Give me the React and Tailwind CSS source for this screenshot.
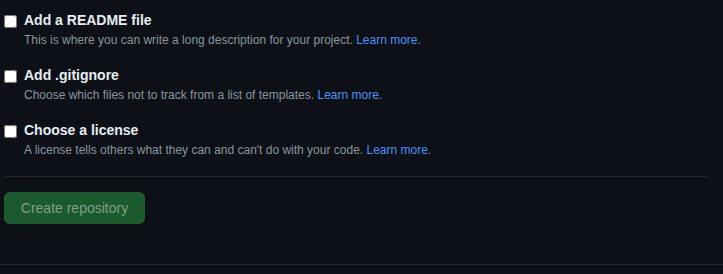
export default function App() {
  const items = [
    {
      title: "Add a README file",
      desc: "This is where you can write a long description for your project.",
    },
    {
      title: "Add .gitignore",
      desc: "Choose which files not to track from a list of templates.",
    },
    {
      title: "Choose a license",
      desc: "A license tells others what they can and can't do with your code.",
    },
  ];
  return (
    <div
      className="w-[723px] h-[274px] bg-[#0d1117] overflow-hidden"
      style={{ fontFamily: '"Liberation Sans", Arial, sans-serif' }}
    >
      <div className="pl-[4px] w-[708px] pt-[10px]">
        <div className="flex flex-col gap-[16px]">
          {items.map((it) => (
            <div key={it.title} className="flex">
              <div className="w-[20px] shrink-0 pt-[5px]">
                <input type="checkbox" className="m-0 block w-[13px] h-[13px]" />
              </div>
              <div className="flex flex-col">
                <div className="text-[14px] leading-[21px] font-bold text-[#e6edf3]">
                  {it.title}
                </div>
                <div className="text-[12px] leading-[18px] text-[#8b949e]">
                  {it.desc}{" "}
                  <span className="text-[#4493f8]">Learn more.</span>
                </div>
              </div>
            </div>
          ))}
        </div>
        <div className="mt-[17px] h-px bg-[#21262d]" />
        <div className="mt-[15px]">
          <button className="h-[32px] w-[141px] rounded-[6px] bg-[#1b5a2c] text-[14px] text-[#7f9f86] flex items-center justify-center">
            Create repository
          </button>
        </div>
      </div>
      <div className="mt-[40px] h-px bg-[#21262d]" />
    </div>
  );
}
